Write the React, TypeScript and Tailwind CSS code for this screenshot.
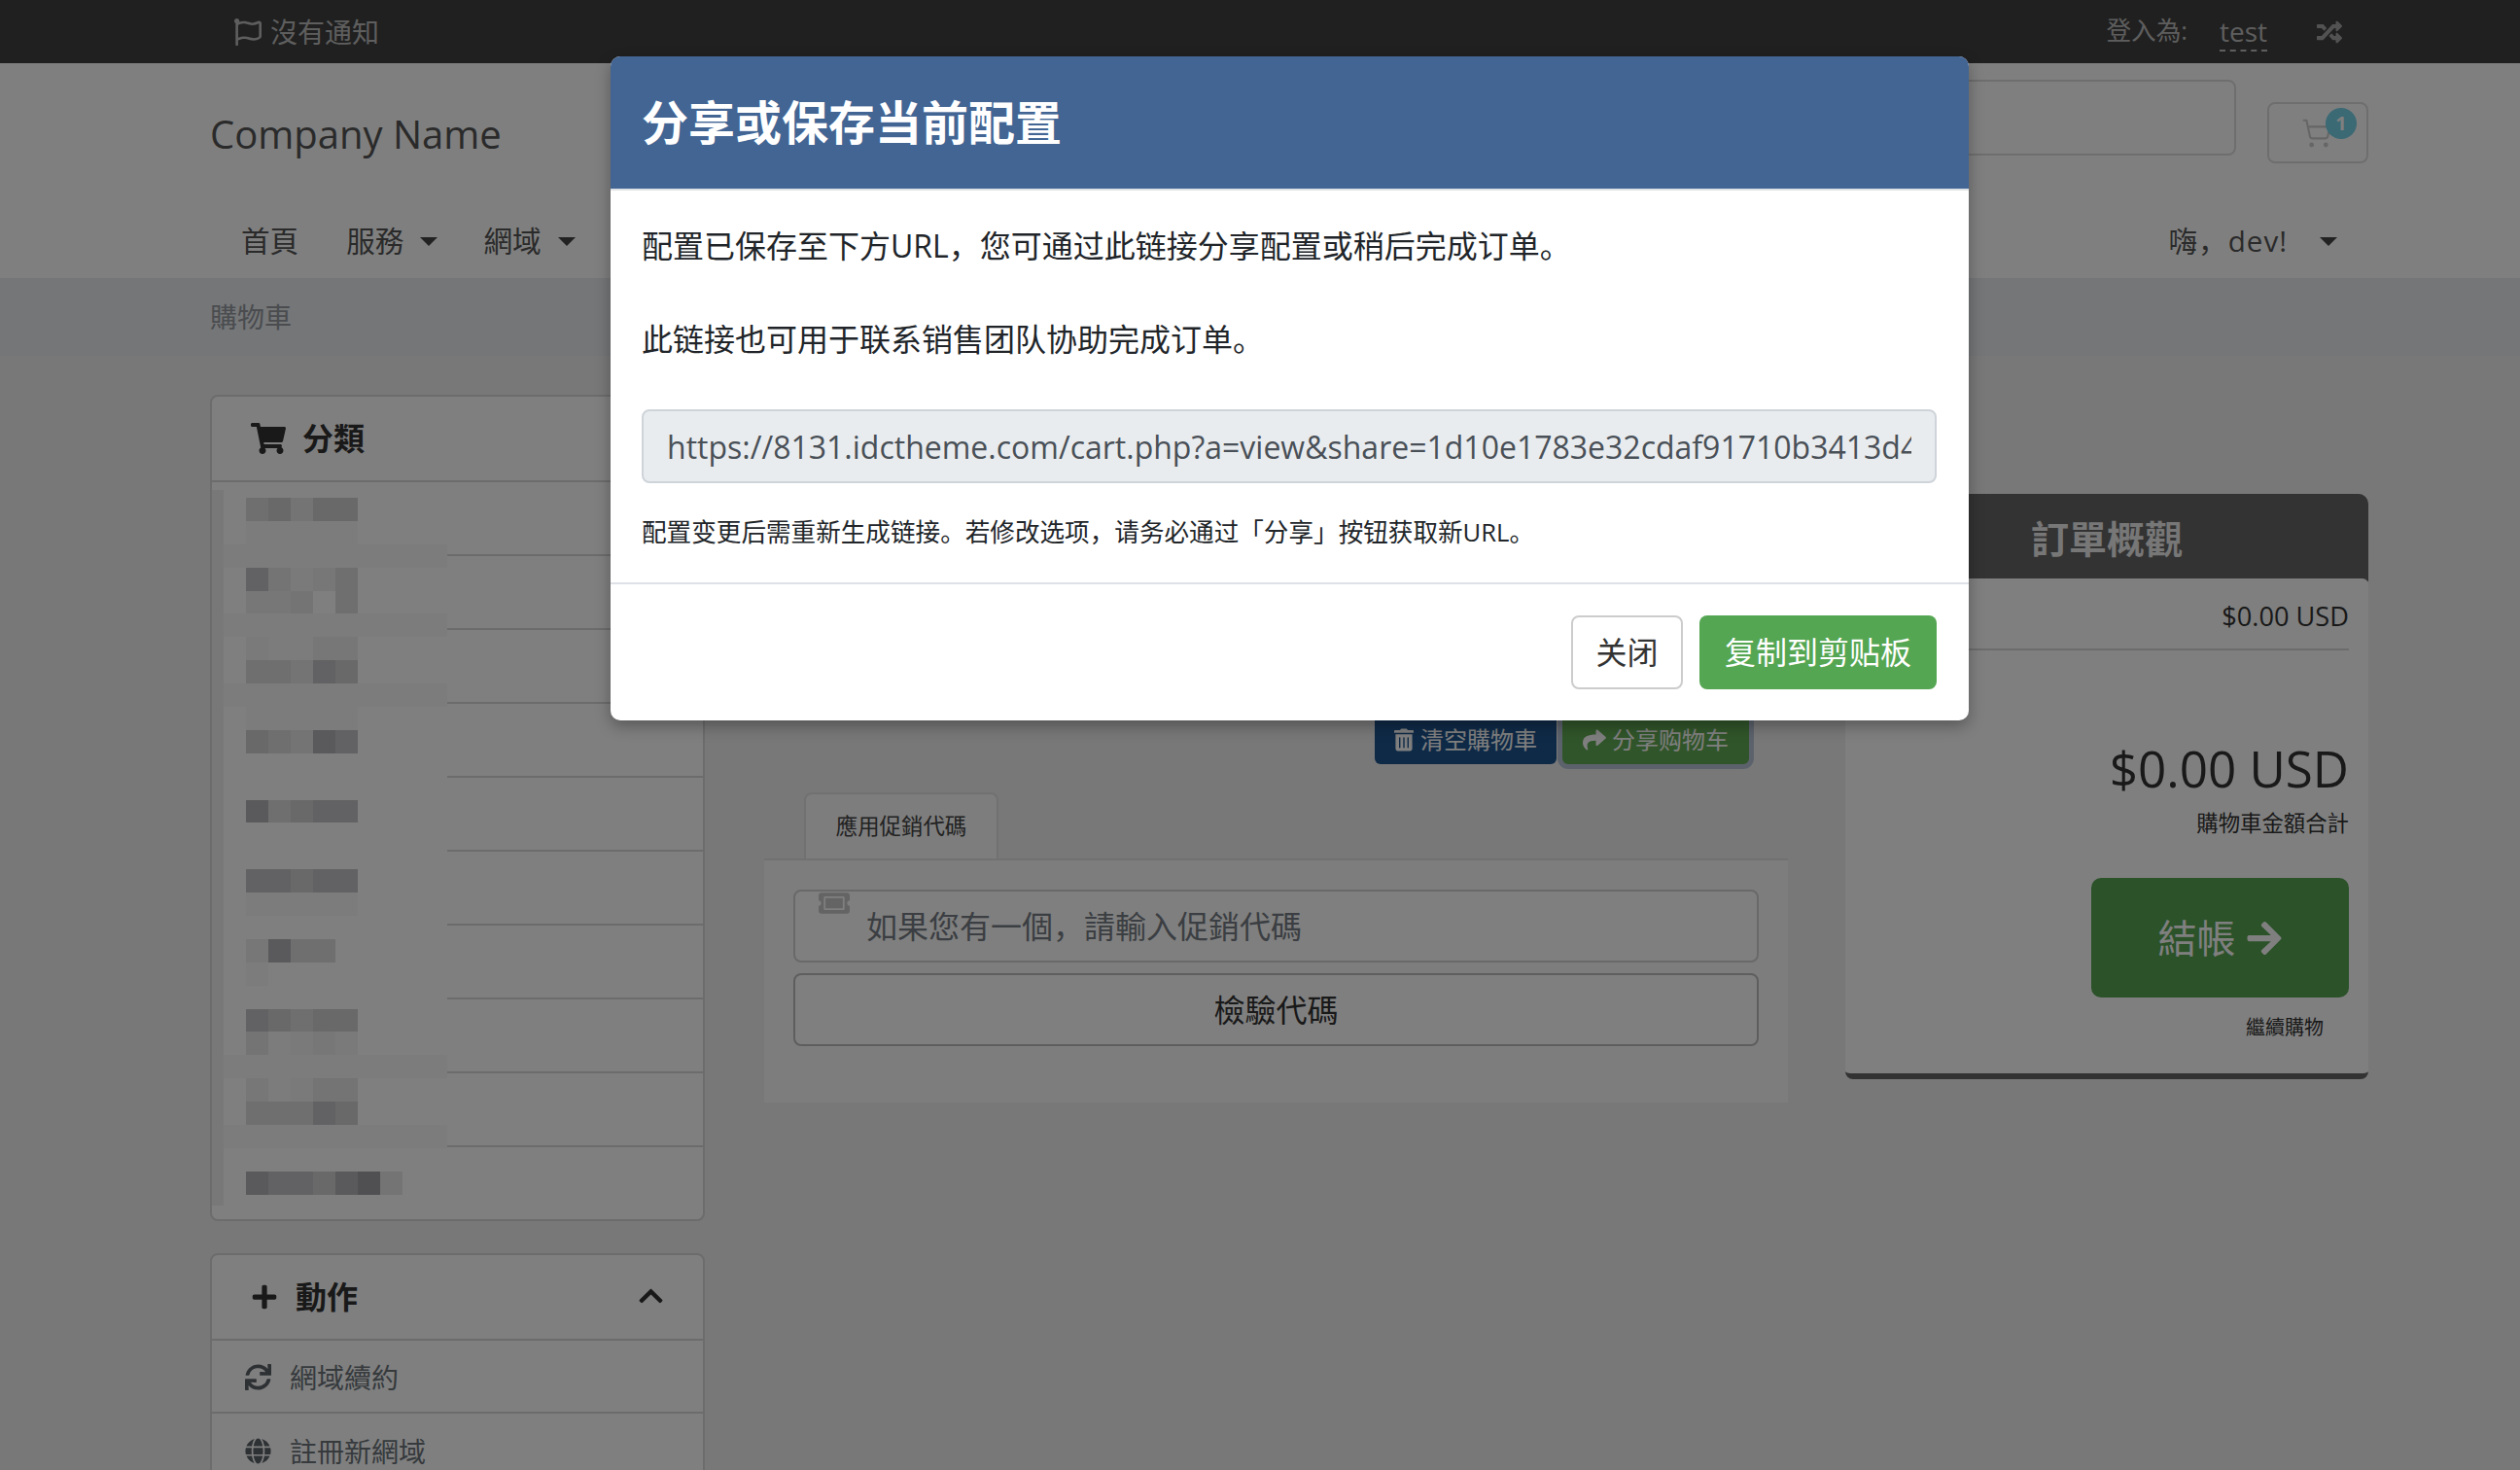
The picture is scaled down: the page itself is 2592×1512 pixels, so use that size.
import {
  FaArrowRight,
  FaChevronUp,
  FaGlobe,
  FaPlus,
  FaRandom,
  FaRegFlag,
  FaShare,
  FaShoppingCart,
  FaSync,
  FaTicketAlt,
  FaTrashAlt,
} from "react-icons/fa"
import { ShoppingCart } from "lucide-react"

const shareUrl =
  "https://8131.idctheme.com/cart.php?a=view&share=1d10e1783e32cdaf91710b3413d4c7a9e05f62b8"

// final on-screen greys, one digit per mosaic cell (the page sits under a 50% backdrop)
const greys: Record<string, number> = {
  "0": 0x50,
  "1": 0x5a,
  "2": 0x62,
  "3": 0x69,
  "4": 0x6f,
  "5": 0x74,
  "6": 0x77,
  "7": 0x7a,
  "8": 0x7c,
  "9": 0x7f,
}

const mosaic = [
  "9999999999",
  "9435339999",
  "9888889999",
  "8888888888",
  "9257649999",
  "9665949999",
  "8888888888",
  "9788669999",
  "9445239999",
  "8888888888",
  "9888889999",
  "9345129999",
  "9999999999",
  "9999999999",
  "9143229999",
  "9999999999",
  "9999999999",
  "9223229999",
  "9888889999",
  "9999999999",
  "9614499999",
  "9899999999",
  "9999999999",
  "9234339999",
  "9587679999",
  "8888888888",
  "9687559999",
  "9444239999",
  "8888888888",
  "9999999999",
  "9122310599",
  "9999999999",
]

function BlurredCategories() {
  return (
    <div className="absolute left-0 top-[8px] grid grid-cols-[12px_repeat(10,23px)] grid-rows-[8px_repeat(30,23.9px)_11px]">
      {mosaic.map((row, y) => (
        <div key={y} className="contents">
          <div className="bg-[#f0f0f0]" />
          {row.split("").map((c, x) => {
            const v = greys[c] * 2
            return <div key={x} style={{ backgroundColor: `rgb(${v},${v},${v + (v < 200 ? 4 : 0)})` }} />
          })}
        </div>
      ))}
    </div>
  )
}

function Caret() {
  return <span className="ml-[17px] h-0 w-0 border-x-[9px] border-t-[9px] border-x-transparent border-t-[#444]" />
}

function Sidebar() {
  return (
    <aside className="flex w-[509px] shrink-0 flex-col">
      <div className="rounded-[8px] border-2 border-[#d8d8d8] bg-white">
        <div className="flex h-[88px] items-center gap-[17px] border-b-2 border-[#d8d8d8] pl-[40px] text-[32px] font-bold text-[#333]">
          <FaShoppingCart className="h-[32px] w-[36px]" />
          <span>分類</span>
        </div>
        <div className="relative">
          {Array.from({ length: 9 }).map((_, i) => (
            <div key={i} className="h-[76px] border-b-2 border-[#d8d8d8]" />
          ))}
          <div className="h-[74px]" />
          <BlurredCategories />
        </div>
      </div>

      <div className="mt-[33px] rounded-[8px] border-2 border-[#d8d8d8] bg-white">
        <div className="flex h-[88px] items-center border-b-2 border-[#d8d8d8] pl-[40px] pr-[39px] text-[#333]">
          <FaPlus className="h-[28px] w-[28px]" />
          <span className="ml-[18px] text-[32px] font-bold">動作</span>
          <FaChevronUp className="-mt-[2px] ml-auto h-[28px] w-[29px]" />
        </div>
        <div className="flex h-[75px] items-center gap-[19px] border-b-2 border-[#d8d8d8] pl-[34px] pt-[2px] text-[28px] text-[#6c747a]">
          <FaSync className="h-[27px] w-[27px] text-[#5c6268]" />
          <span>網域續約</span>
        </div>
        <div className="flex h-[75px] items-center gap-[19px] pl-[34px] pt-[2px] text-[28px] text-[#6c747a]">
          <FaGlobe className="h-[27px] w-[27px] text-[#5c6268]" />
          <span>註冊新網域</span>
        </div>
      </div>
    </aside>
  )
}

function CartMain() {
  return (
    <main className="ml-[61px] flex w-[1053px] shrink-0 flex-col">
      <div className="mt-[328px] flex justify-end gap-[6px] pr-[40px] text-[24px] text-white">
        <button className="flex h-[52px] w-[187px] items-center justify-center gap-[7px] rounded-[6px] bg-[#1e548e] pt-[2px]">
          <FaTrashAlt className="h-[24px] w-[20px]" />
          清空購物車
        </button>
        <button className="flex h-[52px] w-[192px] items-center justify-center gap-[6px] rounded-[6px] bg-[#62aa54] pt-[2px] shadow-[0_0_0_5px_#b8c4d8]">
          <FaShare className="h-[24px] w-[24px]" />
          分享购物车
        </button>
      </div>

      <div className="mt-[29px] pl-[41px]">
        <div className="flex h-[68px] w-[200px] items-center justify-center rounded-t-[8px] border-2 border-b-0 border-[#e2e2e2] bg-[#fafafa] text-[22.4px] text-[#444]">
          應用促銷代碼
        </div>
      </div>
      <div className="flex h-[251px] flex-col gap-[11px] border-t-2 border-[#e2e2e2] bg-[#fafafa] px-[30px] pt-[30px]">
        <div className="relative flex h-[75px] items-center rounded-[8px] border-2 border-[#d2d2d2] bg-white pl-[73px] text-[32px] text-[#767c84]">
          <FaTicketAlt className="absolute left-[24px] top-[-4px] h-[32px] w-[32px] text-[#c8c8c8]" />
          如果您有一個，請輸入促銷代碼
        </div>
        <button className="h-[75px] rounded-[8px] border-2 border-[#bcbcbc] bg-white text-[32px] text-[#333]">檢驗代碼</button>
      </div>
    </main>
  )
}

function OrderSummary() {
  return (
    <section className="ml-[59px] mt-[102px] h-[602px] w-[538px] shrink-0">
      <div className="flex h-[90px] items-start justify-center rounded-t-[10px] bg-[#666] pt-[17px] text-[39px] font-bold text-[#eee]">
        訂單概觀
      </div>
      <div className="-mt-[3px] flex h-[515px] flex-col items-end rounded-b-[8px] rounded-t-[6px] border-b-[6px] border-[#666] bg-white px-[20px]">
        <div className="flex h-[74px] w-full items-end justify-end border-b-2 border-[#d8d8d8] pb-[12px] text-[27.2px] text-[#333]">
          $0.00 USD
        </div>
        <div className="mt-[89px] text-[51.2px] leading-[64px] text-[#333]">$0.00 USD</div>
        <div className="mt-[8px] text-[22.4px] leading-[34px] text-[#333]">購物車金額合計</div>
        <button className="mt-[39px] flex h-[123px] w-[265px] items-center justify-center gap-[10px] rounded-[10px] bg-[#56a452] text-[40px] text-white">
          結帳
          <FaArrowRight className="h-[40px] w-[38px]" />
        </button>
        <div className="mr-[26px] mt-[16px] text-[20px] leading-[30px] text-[#333]">繼續購物</div>
      </div>
    </section>
  )
}

function ShareModal() {
  return (
    <div className="absolute inset-0 z-10 flex items-start bg-black/50 pl-[628px] pt-[58px]">
      <div className="w-[1397px] overflow-hidden rounded-[10px] bg-white shadow-[0_6px_16px_rgba(0,0,0,0.3)]">
        <div className="flex h-[138px] items-center border-b-2 border-[#dee2e6] bg-[#426594] px-[32px] text-[48px] font-bold text-white">
          分享或保存当前配置
        </div>
        <div className="pb-[32px] pl-[32px] pr-[33px] pt-[33px] text-[#212529]">
          <p className="text-[32px] leading-[48px]">配置已保存至下方URL，您可通过此链接分享配置或稍后完成订单。</p>
          <p className="mt-[48px] text-[32px] leading-[48px]">此链接也可用于联系销售团队协助完成订单。</p>
          <input
            readOnly
            value={shareUrl}
            className="mt-[48px] h-[76px] w-full rounded-[8px] border-2 border-[#ced4da] bg-[#e9ecef] px-[24px] text-[32px] text-[#495057]"
          />
          <p className="mt-[32px] text-[25.6px] leading-[38px]">
            配置变更后需重新生成链接。若修改选项，请务必通过「分享」按钮获取新URL。
          </p>
        </div>
        <div className="flex justify-end gap-[17px] border-t-2 border-[#dee2e6] py-[32px] pl-[32px] pr-[33px] text-[32px]">
          <button className="h-[76px] w-[115px] rounded-[8px] border-2 border-[#ccc] bg-white text-[#333]">关闭</button>
          <button className="h-[76px] w-[244px] rounded-[8px] bg-[#55a653] text-white">复制到剪贴板</button>
        </div>
      </div>
    </div>
  )
}

export default function App() {
  return (
    <div className="relative h-[1512px] w-[2592px] overflow-hidden bg-[#f0f0f0] font-['Open_Sans','Noto_Sans_CJK_SC',sans-serif]">
      <div className="flex h-[65px] items-center bg-[#404040] pl-[241px] pr-[182px] text-[#bcbcbc]">
        <FaRegFlag className="h-[28px] w-[28px]" />
        <span className="ml-[9px] text-[28px]">沒有通知</span>
        <span className="ml-auto text-[25.6px]">登入為:</span>
        <span className="ml-[33px] border-b-2 border-dashed border-[#bcbcbc] text-[28px] leading-[38px]">test</span>
        <FaRandom className="ml-[50px] h-[26px] w-[28px] text-[#a4a4a4]" />
      </div>

      <header className="h-[221px] bg-white pl-[216px] pr-[156px] text-[#555]">
        <div className="flex h-[146px] items-start">
          <div className="mt-[46px] text-[40px] leading-[54px] text-[#555]">Company Name</div>
          <div className="ml-auto mt-[17px] h-[78px] w-[700px] rounded-[8px] border-2 border-[#ddd]" />
          <div className="relative ml-[32px] mt-[40px] flex h-[63px] w-[104px] items-center rounded-[8px] border-2 border-[#ddd] pl-[32px]">
            <ShoppingCart className="h-[32px] w-[34px] text-[#ccc]" strokeWidth={1.6} />
            <span className="absolute left-[58px] top-[4px] flex h-[32px] w-[32px] items-center justify-center rounded-full bg-[#76d2e8] text-[20px] font-bold text-white">
              1
            </span>
          </div>
        </div>
        <nav className="flex h-[75px] items-center pl-[32px] pr-[32px] text-[29.6px]">
          <span>首頁</span>
          <span className="ml-[49px]">服務</span>
          <Caret />
          <span className="ml-[47px]">網域</span>
          <Caret />
          <span className="ml-auto tracking-[1px]">嗨，dev!</span>
          <span className="ml-[33px] h-0 w-0 border-x-[9px] border-t-[9px] border-x-transparent border-t-[#444]" />
        </nav>
      </header>

      <div className="flex h-[80px] items-center bg-[#eaecf0] px-[216px] text-[28px] text-[#94999e]">購物車</div>

      <div className="flex pl-[216px] pt-[40px]">
        <Sidebar />
        <CartMain />
        <OrderSummary />
      </div>

      <ShareModal />
    </div>
  )
}
